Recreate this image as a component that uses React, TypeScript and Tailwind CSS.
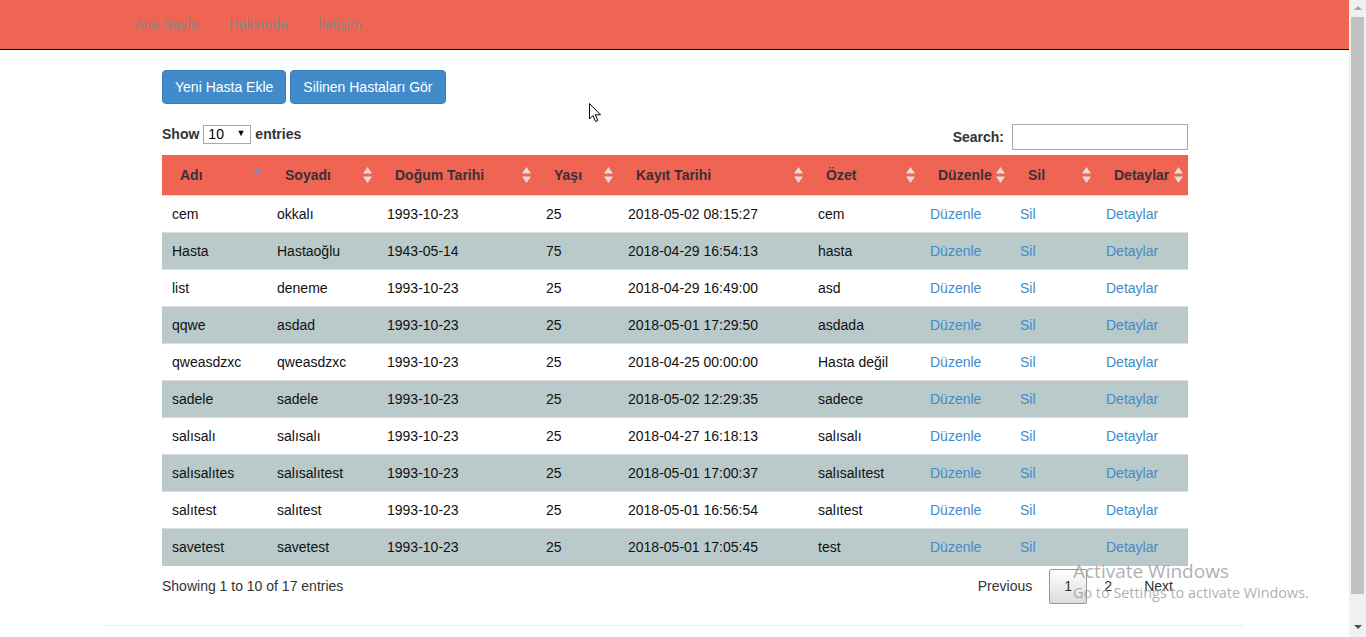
import React from "react";

const rows = [
  ["cem", "okkalı", "1993-10-23", "25", "2018-05-02 08:15:27", "cem"],
  ["Hasta", "Hastaoğlu", "1943-05-14", "75", "2018-04-29 16:54:13", "hasta"],
  ["list", "deneme", "1993-10-23", "25", "2018-04-29 16:49:00", "asd"],
  ["qqwe", "asdad", "1993-10-23", "25", "2018-05-01 17:29:50", "asdada"],
  ["qweasdzxc", "qweasdzxc", "1993-10-23", "25", "2018-04-25 00:00:00", "Hasta değil"],
  ["sadele", "sadele", "1993-10-23", "25", "2018-05-02 12:29:35", "sadece"],
  ["salısalı", "salısalı", "1993-10-23", "25", "2018-04-27 16:18:13", "salısalı"],
  ["salısalıtes", "salısalıtest", "1993-10-23", "25", "2018-05-01 17:00:37", "salısalıtest"],
  ["salıtest", "salıtest", "1993-10-23", "25", "2018-05-01 16:56:54", "salıtest"],
  ["savetest", "savetest", "1993-10-23", "25", "2018-05-01 17:05:45", "test"],
];

const cols = [
  { label: "Adı", w: 105 },
  { label: "Soyadı", w: 110 },
  { label: "Doğum Tarihi", w: 159 },
  { label: "Yaşı", w: 82 },
  { label: "Kayıt Tarihi", w: 190 },
  { label: "Özet", w: 112 },
  { label: "Düzenle", w: 90 },
  { label: "Sil", w: 86 },
  { label: "Detaylar", w: 92 },
];

function SortIcon({ active }: { active?: boolean }) {
  if (active) {
    return (
      <svg width="9" height="16" viewBox="0 0 9 16" className="shrink-0 self-start mt-[13px]">
        <polygon points="4.5,0 9,6 0,6" fill="#7f83d6" />
      </svg>
    );
  }
  return (
    <svg width="9" height="16" viewBox="0 0 9 16" className="shrink-0">
      <polygon points="4.5,0 9,6.5 0,6.5" fill="#e2dcdb" />
      <polygon points="0,9.5 9,9.5 4.5,16" fill="#e2dcdb" />
    </svg>
  );
}

export default function App() {
  return (
    <div
      className="flex w-[1366px] h-[637px] overflow-hidden bg-white relative"
      style={{ fontFamily: '"Liberation Sans", Arial, sans-serif' }}
    >
      <div className="w-[1349px] shrink-0 flex flex-col">
        {/* Navbar */}
        <nav className="h-[50px] bg-[#ef6453] border-b border-black flex items-center pl-[119px]">
          <a className="px-[15px] text-[14px] text-[#8f8581]">Ana Sayfa</a>
          <a className="px-[15px] text-[14px] text-[#8f8581]">Hakkında</a>
          <a className="px-[15px] text-[14px] text-[#8f8581]">İletişim</a>
        </nav>

        <div className="pl-[162px] w-[1188px] box-content">
          <div className="flex gap-[4px] mt-[20px]">
            <button className="h-[34px] px-[12px] rounded-[4px] bg-[#428bca] border border-[#357ebd] text-white text-[14px]">
              Yeni Hasta Ekle
            </button>
            <button className="h-[34px] px-[12px] rounded-[4px] bg-[#428bca] border border-[#357ebd] text-white text-[14px]">
              Silinen Hastaları Gör
            </button>
          </div>

          <div className="flex justify-between items-start mt-[20px] w-[1026px]">
            <div className="flex items-center h-[20px] text-[14px] font-bold text-[#333] gap-[4px]">
              <span>Show</span>
              <div className="w-[48px] h-[19px] border border-[#a9a9a9] flex items-center justify-between pl-[4px] pr-[5px] font-normal text-[#000] text-[14px] bg-white">
                <span>10</span>
                <span className="text-[9px]">▼</span>
              </div>
              <span>entries</span>
            </div>
            <div className="flex items-center gap-[8px] text-[14px] font-bold text-[#333]">
              <span>Search:</span>
              <div className="w-[176px] h-[26px] border border-[#a9a9a9] bg-white" />
            </div>
          </div>

          <table className="mt-[5px] w-[1026px] table-fixed border-collapse text-[14px]">
            <colgroup>
              {cols.map((c) => (
                <col key={c.label} style={{ width: c.w }} />
              ))}
            </colgroup>
            <thead>
              <tr className="h-[40px] bg-[#ef6453]">
                {cols.map((c, i) => (
                  <th key={c.label} className="p-0 font-bold text-[#3b3035] text-left">
                    <div className="flex items-center justify-between h-[40px] pl-[18px] pr-[5px]">
                      <span className="whitespace-nowrap">{c.label}</span>
                      <SortIcon active={i === 0} />
                    </div>
                  </th>
                ))}
              </tr>
            </thead>
            <tbody>
              {rows.map((r, i) => (
                <tr
                  key={i}
                  className={`h-[37px] border-t border-[#dddddd] ${i % 2 === 1 ? "bg-[#bac9ca]" : "bg-white"}`}
                >
                  {r.map((v, j) => (
                    <td key={j} className="px-[10px] text-[#111] whitespace-nowrap">
                      {v}
                    </td>
                  ))}
                  <td className="px-[10px] text-[#428bca]">Düzenle</td>
                  <td className="px-[10px] text-[#428bca]">Sil</td>
                  <td className="px-[10px] text-[#428bca]">Detaylar</td>
                </tr>
              ))}
            </tbody>
          </table>

          <div className="flex justify-between w-[1026px]">
            <div className="pt-[10px] text-[14px] text-[#333] leading-[20px]">Showing 1 to 10 of 17 entries</div>
            <div className="flex pt-[3px] text-[14px] text-[#333]">
              <span className="px-[14px] h-[35px] flex items-center border border-transparent">Previous</span>
              <span className="ml-[2px] w-[38px] h-[35px] flex items-center justify-center border border-[#979797] rounded-[2px] bg-gradient-to-b from-white to-[#dcdcdc]">
                1
              </span>
              <span className="ml-[2px] w-[38px] h-[35px] flex items-center justify-center border border-transparent">2</span>
              <span className="ml-[2px] px-[14px] h-[35px] flex items-center border border-transparent">Next</span>
            </div>
          </div>
        </div>

        <div className="ml-[104px] w-[1141px] mt-[21px] border-t border-[#eeeeee]" />
      </div>

      {/* Scrollbar */}
      <div className="w-[17px] shrink-0 h-[637px] bg-[#f1f1f1] flex flex-col items-center">
        <div className="h-[17px] flex items-center justify-center">
          <svg width="8" height="5" viewBox="0 0 8 5">
            <polygon points="4,0 8,4 0,4" fill="#a3a3a3" />
          </svg>
        </div>
        <div className="w-[13px] h-[577px] bg-[#c1c1c1]" />
        <div className="flex-1 flex items-end pb-[7px]">
          <svg width="8" height="5" viewBox="0 0 8 5">
            <polygon points="0,0 8,0 4,4" fill="#505050" />
          </svg>
        </div>
      </div>

      {/* Cursor */}
      <svg className="absolute left-[589px] top-[103px]" width="13" height="20" viewBox="0 0 13 20">
        <path d="M0.5 0.5 L0.5 16 L4 12.5 L6.5 18.5 L8.8 17.5 L6.3 11.8 L11.5 11.8 Z" fill="white" stroke="black" strokeWidth="1" />
      </svg>

      {/* Activate Windows watermark */}
      <div
        className="absolute left-[1073px] top-[559px] text-[#9a9a9a]/80 pointer-events-none"
        style={{ fontFamily: '"Open Sans", "Noto Sans", sans-serif' }}
      >
        <div className="text-[19px] leading-[24px]">Activate Windows</div>
        <div className="text-[14.4px] leading-[20px]">Go to Settings to activate Windows.</div>
      </div>
    </div>
  );
}
